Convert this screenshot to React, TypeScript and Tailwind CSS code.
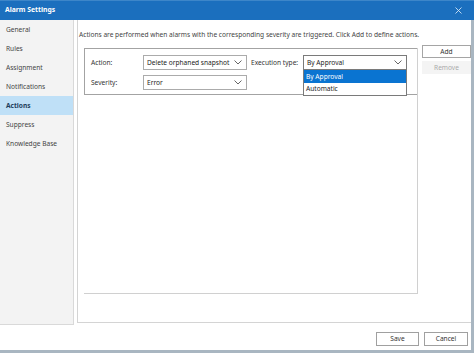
import React from "react";

const Chevron = ({ className = "" }: { className?: string }) => (
  <svg width="8" height="5" viewBox="0 0 8 5" className={className}>
    <path d="M0.5 0.5 L4 4 L7.5 0.5" fill="none" stroke="#555" strokeWidth="0.9" />
  </svg>
);

const Dropdown = ({ value, active = false }: { value: string; active?: boolean }) => (
  <div
    className={`w-[104px] h-[15px] flex items-center justify-between pl-[3px] pr-[4px] bg-white border whitespace-nowrap ${
      active ? "border-[#7a7a7a]" : "border-[#ababab]"
    }`}
  >
    <span className="text-[#222]">{value}</span>
    <Chevron />
  </div>
);

export default function App() {
  const items = ["General", "Rules", "Assignment", "Notifications", "Actions", "Suppress", "Knowledge Base"];
  return (
    <div
      className="w-[474px] h-[353px] bg-white flex flex-col overflow-hidden text-[6.6px] text-[#333] whitespace-nowrap"
      style={{ fontFamily: '"Noto Sans", "Open Sans", sans-serif' }}
    >
      {/* title bar */}
      <div className="h-[20px] bg-[#1b6fbe] border-t border-[#3d86c9] flex items-center justify-between pl-[5px] pr-[12px] shrink-0">
        <span className="text-white font-bold text-[6.8px]">Alarm Settings</span>
        <svg width="7" height="7" viewBox="0 0 7 7">
          <path d="M0.5 0.5 L6.5 6.5 M6.5 0.5 L0.5 6.5" stroke="#cfe3f5" strokeWidth="0.9" />
        </svg>
      </div>

      <div className="flex-1 flex flex-col border-r-[3px] border-b-[3px] border-[#a9b6c1]">
        <div className="h-[305px] flex shrink-0">
          {/* sidebar */}
          <div className="w-[74px] bg-[#f3f3f3] border-r border-b border-[#d9d9d9] flex flex-col">
            {items.map((it) => (
              <div
                key={it}
                className={`h-[19px] flex items-center pl-[6px] ${
                  it === "Actions" ? "bg-[#bfe0f7] font-bold text-[#1e3f5e]" : "text-[#444]"
                }`}
              >
                {it}
              </div>
            ))}
          </div>

          {/* main */}
          <div className="flex-1 pl-[3px] pb-[2px] flex flex-col">
            <div className="flex-1 border-l border-b border-[#d4d4d4] pl-[1px] flex flex-col">
              <div className="h-[28px] flex items-center pt-[1px] text-[#444]">
                Actions are performed when alarms with the corresponding severity are triggered. Click Add to define actions.
              </div>
              <div className="flex pl-[5px] mt-[0px]">
                <div className="w-[334px] h-[246px] border-r border-b border-[#d0d0d0] flex flex-col">
                  <div className="h-[47px] border-l border-t border-b border-[#a3a3a3] relative pl-[6px] pt-[6px] flex flex-col gap-[5px]">
                    <div className="flex items-center">
                      <span className="w-[52px]">Action:</span>
                      <Dropdown value="Delete orphaned snapshot" />
                      <span className="ml-[4px] w-[52px]">Execution type:</span>
                      <div className="relative">
                        <Dropdown value="By Approval" active />
                        <div className="absolute left-0 top-[14px] w-[104px] border border-[#7a7a7a] bg-white flex flex-col z-10">
                          <div className="h-[13px] flex items-center pl-[2px] bg-[#0a74d1] text-white">By Approval</div>
                          <div className="h-[12px] flex items-center pl-[2px] text-[#222]">Automatic</div>
                        </div>
                      </div>
                    </div>
                    <div className="flex items-center">
                      <span className="w-[52px]">Severity:</span>
                      <Dropdown value="Error" />
                    </div>
                  </div>
                </div>
                <div className="ml-[4px] flex flex-col gap-[3px] -mt-[3px]">
                  <div className="w-[49px] h-[13px] border border-[#a5a5a5] bg-white flex items-center justify-center text-[#333]">
                    Add
                  </div>
                  <div className="w-[49px] h-[13px] bg-[#f4f4f4] flex items-center justify-center text-[#aaa]">
                    Remove
                  </div>
                </div>
              </div>
            </div>
          </div>
        </div>

        {/* footer */}
        <div className="flex-1 flex items-center justify-end gap-[5px] pr-[3px] pt-[3px]">
          <div className="w-[43px] h-[14px] border border-[#a0a0a0] flex items-center justify-center">Save</div>
          <div className="w-[44px] h-[14px] border border-[#a0a0a0] flex items-center justify-center">Cancel</div>
        </div>
      </div>
    </div>
  );
}
